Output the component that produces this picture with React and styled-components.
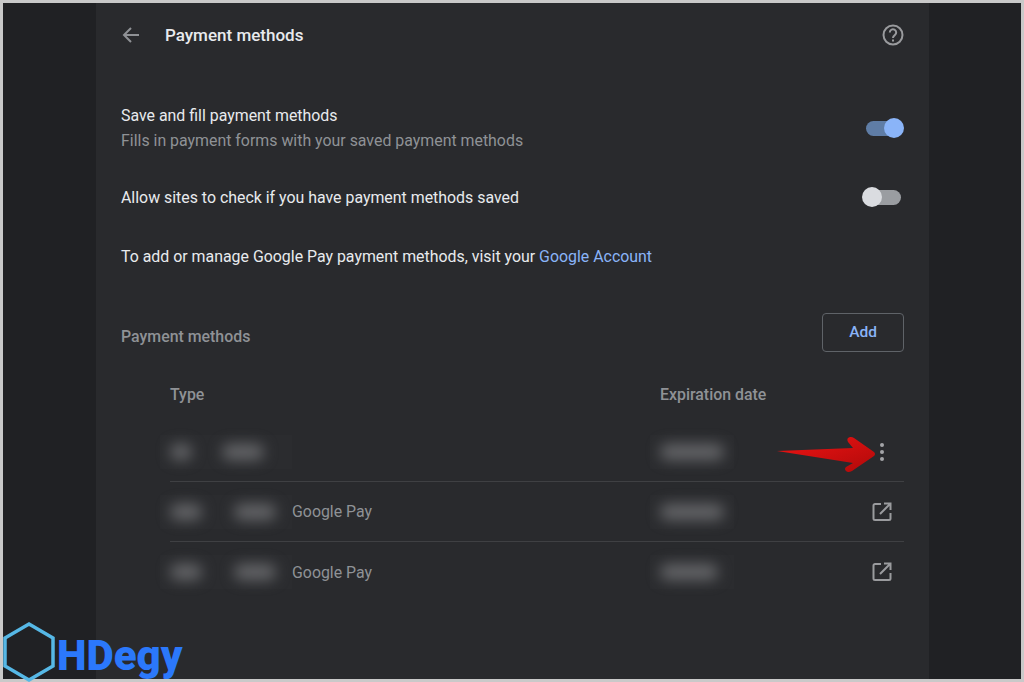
import styled, { createGlobalStyle } from "styled-components";

const PAYMENT_ROWS = [
  { id: 'first', left: [22, 42], gap: 30, expiry: 64, action: 'menu' },
  { id: 'second', left: [32, 42], gap: 32, wallet: 'Google Pay', expiry: 64, action: 'open' },
  { id: 'third', left: [32, 42], gap: 32, wallet: 'Google Pay', expiry: 58, action: 'open' }
];

const GlobalStyle = createGlobalStyle`
  html, body {
    margin: 0;
    background: #202124;
  }
  body {
    font-family: Roboto, "Liberation Sans", sans-serif;
    -webkit-font-smoothing: antialiased;
  }
`;

const Frame = styled.div`
  position: relative;
  box-sizing: border-box;
  width: 1024px;
  height: 682px;
  border: 3px solid #c9c9c9;
  background: #202124;
  display: flex;
  justify-content: center;
`;

const Card = styled.main`
  box-sizing: border-box;
  width: 833px;
  height: 100%;
  margin-left: 1px;
  padding: 0 25px;
  background: #292a2d;
`;

const Header = styled.header`
  display: flex;
  align-items: center;
  height: 64px;
  color: #e8eaed;
`;

const BackIcon = styled.svg`
  width: 20px;
  height: 20px;
  color: #8f9195;
`;

const Title = styled.h1`
  flex: 1;
  margin: 0 0 0 24px;
  font-size: 17px;
  font-weight: 500;
  color: #e8eaed;
`;

const HelpIcon = styled.svg`
  width: 24px;
  height: 24px;
  margin-right: -1px;
  color: #9a9b9e;
`;

const SettingRow = styled.div`
  display: flex;
  align-items: center;
  justify-content: space-between;
  height: ${({ $height }) => $height}px;
  margin-top: ${({ $top }) => $top || 0}px;
`;

const Label = styled.div`
  font-size: 15.9px;
  line-height: 25px;
  color: #e8eaed;
`;

const SubLabel = styled.div`
  font-size: 15.9px;
  line-height: 25px;
  color: #8f9296;
`;

const AccountLink = styled.a`
  color: #8ab4f8;
`;

const Track = styled.div`
  position: relative;
  width: 35px;
  height: 15px;
  margin-right: 3px;
  border-radius: 8px;
  background: ${({ $on }) => ($on ? '#5f7da6' : '#9a9da1')};
`;

const Knob = styled.div`
  position: absolute;
  top: -2.5px;
  ${({ $on }) => ($on ? 'right: -3px;' : 'left: -4px;')}
  width: 20px;
  height: 20px;
  border-radius: 50%;
  background: ${({ $on }) => ($on ? '#8ab4f8' : '#dadce0')};
`;

const MethodsHeader = styled.div`
  display: flex;
  align-items: flex-start;
  justify-content: space-between;
  margin-top: 45px;
`;

const SectionTitle = styled.h2`
  margin: 15px 0 0;
  font-size: 15.9px;
  line-height: 18px;
  font-weight: 500;
  color: #8f9296;
`;

const AddButton = styled.button`
  box-sizing: border-box;
  width: 82px;
  height: 39px;
  padding: 0 0 2px;
  border: 1px solid #5f6368;
  border-radius: 4px;
  background: transparent;
  font-family: inherit;
  font-size: 15.5px;
  font-weight: 500;
  color: #8ab4f8;
`;

const Table = styled.div`
  margin-left: 49px;
  margin-top: 14px;
`;

const GridRow = styled.div`
  box-sizing: border-box;
  display: grid;
  grid-template-columns: 490px 1fr 44px;
  align-items: center;
  height: ${({ $height }) => $height}px;
  border-bottom: ${({ $line }) => ($line ? '1px solid #3f4043' : 'none')};
`;

const ColumnHead = styled.div`
  font-size: 15.9px;
  font-weight: 500;
  color: #8f9296;
`;

const Cell = styled.div`
  display: flex;
  align-items: center;
`;

const Smudge = styled.div`
  flex: none;
  width: ${({ $width }) => $width}px;
  height: 16px;
  border-radius: 8px;
  background: #646568;
  filter: blur(7px);
`;

const SmudgeGroup = styled.div`
  box-sizing: border-box;
  display: flex;
  align-items: center;
  gap: ${({ $gap }) => $gap}px;
  width: 132px;
  height: 34px;
  margin-left: -10px;
  padding-left: 10px;
  background: #2b2c2f;
`;

const ExpiryPatch = styled.div`
  box-sizing: border-box;
  display: flex;
  align-items: center;
  width: 84px;
  height: 34px;
  margin-left: -10px;
  padding-left: 10px;
  background: #2b2c2f;
`;

const Wallet = styled.span`
  font-size: 15.9px;
  color: #8f9296;
`;

const ActionCell = styled.div`
  display: flex;
  justify-content: flex-end;
  padding-right: 10px;
`;

const OpenIcon = styled.svg`
  width: 24px;
  height: 24px;
  color: #9a9b9e;
`;

const MoreIcon = styled.svg`
  width: 24px;
  height: 24px;
  color: #a3a4a7;
`;

const ArrowMark = styled.svg`
  position: absolute;
  left: 772px;
  top: 431px;
  width: 104px;
  height: 44px;
`;

const Watermark = styled.div`
  position: absolute;
  left: -2px;
  bottom: -4px;
  display: flex;
  align-items: flex-end;
`;

const Hexagon = styled.svg`
  width: 56px;
  height: 62px;
`;

const Brand = styled.span`
  margin: 0 0 3px 0;
  font-family: Roboto, sans-serif;
  font-size: 42px;
  line-height: 48px;
  font-weight: 900;
  color: #2b78fb;
`;

const RowAction = ({ kind }) => kind === 'menu' ? (
  <MoreIcon viewBox="0 0 24 24" fill="currentColor">
    <circle cx="12" cy="5" r="2" />
    <circle cx="12" cy="12" r="2" />
    <circle cx="12" cy="19" r="2" />
  </MoreIcon>
) : (
  <OpenIcon viewBox="0 0 24 24" fill="none" stroke="currentColor" strokeWidth="2">
    <path d="M11 4H5a1.5 1.5 0 0 0-1.5 1.5v13A1.5 1.5 0 0 0 5 20h14a1.5 1.5 0 0 0 1.5-1.5V13" />
    <path d="M14 3.5h6.5V10M20.5 3.5 10 14" />
  </OpenIcon>
);

const buildRow = ({ id, left, gap, wallet, expiry, action }, index) => (
  <GridRow key={id} $height={60} $line={index < PAYMENT_ROWS.length - 1}>
    <Cell>
      <SmudgeGroup $gap={gap}>
        {left.map((w, i) => <Smudge key={i} $width={w} />)}
      </SmudgeGroup>
      {wallet && <Wallet>{wallet}</Wallet>}
    </Cell>
    <Cell>
      <ExpiryPatch>
        <Smudge $width={expiry} />
      </ExpiryPatch>
    </Cell>
    <ActionCell>
      <RowAction kind={action} />
    </ActionCell>
  </GridRow>
);

export default function App() {
  return (
    <>
      <GlobalStyle />
      <Frame>
        <Card>
          <Header>
            <BackIcon viewBox="0 0 20 20" fill="none" stroke="currentColor" strokeWidth="2">
              <path d="M18 10H3M10 3l-7 7 7 7" />
            </BackIcon>
            <Title>Payment methods</Title>
            <HelpIcon viewBox="0 0 24 24" fill="none" stroke="currentColor" strokeWidth="2">
              <circle cx="12" cy="12" r="9.5" />
              <path d="M8.8 9.5a3.2 3.2 0 1 1 5 2.6c-1.1.8-1.8 1.4-1.8 2.9" />
              <path d="M12 16.5v2" />
            </HelpIcon>
          </Header>

          <SettingRow $top={36} $height={50}>
            <div>
              <Label>Save and fill payment methods</Label>
              <SubLabel>Fills in payment forms with your saved payment methods</SubLabel>
            </div>
            <Track $on><Knob $on /></Track>
          </SettingRow>

          <SettingRow $top={32} $height={24}>
            <Label>Allow sites to check if you have payment methods saved</Label>
            <Track><Knob /></Track>
          </SettingRow>

          <SettingRow $top={35} $height={24}>
            <Label>To add or manage Google Pay payment methods, visit your <AccountLink>Google Account</AccountLink></Label>
          </SettingRow>

          <MethodsHeader>
            <SectionTitle>Payment methods</SectionTitle>
            <AddButton>Add</AddButton>
          </MethodsHeader>

          <Table>
            <GridRow $height={56}>
              <ColumnHead>Type</ColumnHead>
              <ColumnHead>Expiration date</ColumnHead>
            </GridRow>
            {PAYMENT_ROWS.map(buildRow)}
          </Table>
        </Card>

        <ArrowMark viewBox="0 0 104 44">
          <defs>
            <linearGradient id="arrowRed" x1="0" y1="0" x2="1" y2="1">
              <stop offset="0" stopColor="#f01414" />
              <stop offset="1" stopColor="#b00a0a" />
            </linearGradient>
          </defs>
          <path
            d="M2 17 L78 14 L73 8 Q71 4 75 3 Q77 2.500 79 4 L99 18 Q101 20 99 22 L77 37 Q73 39 71 37 Q69 35 71 33 L78 29 Z"
            fill="url(#arrowRed)"
          />
        </ArrowMark>

        <Watermark>
          <Hexagon viewBox="0 0 56 62" fill="none" stroke="#56b8e6" strokeWidth="3.5">
            <path d="M28 3 52 17 V45 L28 59 4 45 V17 Z" />
          </Hexagon>
          <Brand>HDegy</Brand>
        </Watermark>
      </Frame>
    </>
  );
}
